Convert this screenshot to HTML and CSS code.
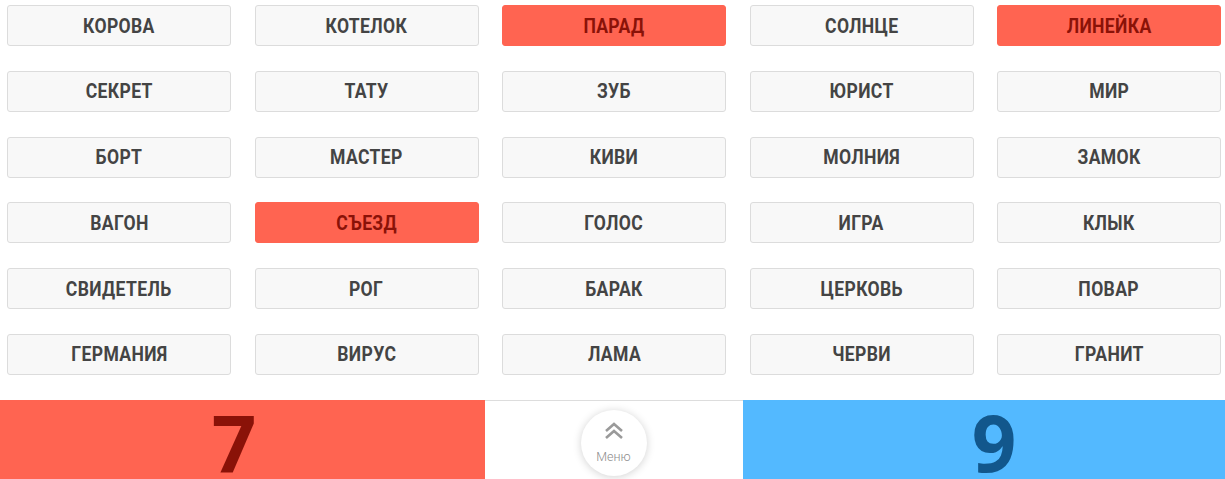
FILE: index.html
```html
<!DOCTYPE html>
<html lang="ru">
<head>
<meta charset="utf-8">
<title>Игра</title>
<link rel="stylesheet" href="styles.css">
</head>
<body>
<div class="board">
  <div class="card"><span class="word">КОРОВА</span></div>
  <div class="card"><span class="word">КОТЕЛОК</span></div>
  <div class="card red"><span class="word">ПАРАД</span></div>
  <div class="card"><span class="word">СОЛНЦЕ</span></div>
  <div class="card red"><span class="word">ЛИНЕЙКА</span></div>

  <div class="card"><span class="word">СЕКРЕТ</span></div>
  <div class="card"><span class="word">ТАТУ</span></div>
  <div class="card"><span class="word">ЗУБ</span></div>
  <div class="card"><span class="word">ЮРИСТ</span></div>
  <div class="card"><span class="word">МИР</span></div>

  <div class="card"><span class="word">БОРТ</span></div>
  <div class="card"><span class="word">МАСТЕР</span></div>
  <div class="card"><span class="word">КИВИ</span></div>
  <div class="card"><span class="word">МОЛНИЯ</span></div>
  <div class="card"><span class="word">ЗАМОК</span></div>

  <div class="card"><span class="word">ВАГОН</span></div>
  <div class="card red"><span class="word">СЪЕЗД</span></div>
  <div class="card"><span class="word">ГОЛОС</span></div>
  <div class="card"><span class="word">ИГРА</span></div>
  <div class="card"><span class="word">КЛЫК</span></div>

  <div class="card"><span class="word">СВИДЕТЕЛЬ</span></div>
  <div class="card"><span class="word">РОГ</span></div>
  <div class="card"><span class="word">БАРАК</span></div>
  <div class="card"><span class="word">ЦЕРКОВЬ</span></div>
  <div class="card"><span class="word">ПОВАР</span></div>

  <div class="card"><span class="word">ГЕРМАНИЯ</span></div>
  <div class="card"><span class="word">ВИРУС</span></div>
  <div class="card"><span class="word">ЛАМА</span></div>
  <div class="card"><span class="word">ЧЕРВИ</span></div>
  <div class="card"><span class="word">ГРАНИТ</span></div>
</div>
<div class="score">
  <div class="team team-red"><span class="num">7</span></div>
  <div class="middle">
    <button class="menu">
      <svg class="chev" width="20" height="18" viewBox="0 0 20 18">
        <polyline points="2,9 10,2 18,9" fill="none" stroke="#9a9a9a" stroke-width="2.6"/>
        <polyline points="2,16 10,9 18,16" fill="none" stroke="#9a9a9a" stroke-width="2.6"/>
      </svg>
      <span class="menu-label">Меню</span>
    </button>
  </div>
  <div class="team team-blue"><span class="num">9</span></div>
</div>
</body>
</html>
```

FILE: styles.css
```css
* { box-sizing: border-box; }
html, body { margin: 0; padding: 0; background: #fff; }
body { font-family: Roboto, "Noto Sans", sans-serif; overflow: hidden; }

.board {
  display: grid;
  grid-template-columns: repeat(5, 1fr);
  column-gap: 23.5px;
  row-gap: 24.8px;
  padding: 5px 4px 0 7px;
}
.card {
  height: 41px;
  display: flex;
  align-items: center;
  justify-content: center;
  background: #f8f8f8;
  border: 1px solid #dcdcdc;
  border-radius: 3px;
  color: #444;
  font-weight: 700;
  font-size: 19.5px;
  letter-spacing: 0.4px;
}
.word {
  display: inline-block;
  transform: scaleX(0.9);
  padding-top: 1px;
}
.card.red {
  background: #ff6451;
  border-color: #ff6451;
  color: #8a1208;
}

.score {
  margin-top: 25px;
  display: grid;
  grid-template-columns: 485px 258px 1fr;
  height: 79px;
}
.team {
  display: flex;
  justify-content: center;
  align-items: flex-start;
  font-family: "Open Sans", Roboto, sans-serif;
  font-weight: 700;
  font-size: 78px;
  overflow: hidden;
}
.num { line-height: 60px; margin-top: 12px; }
.team-red { background: #ff6451; color: #8a1208; padding-right: 17px; }
.team-blue { background: #53b9ff; color: #12578c; padding-left: 20px; }
.middle {
  border-top: 1px solid #dddddd;
  display: flex;
  justify-content: center;
  padding-top: 9px;
  padding-right: 1px;
}
.menu {
  width: 66px;
  height: 66px;
  border-radius: 50%;
  border: none;
  background: #fff;
  box-shadow: 0 1px 8px rgba(0,0,0,0.18);
  display: flex;
  flex-direction: column;
  align-items: center;
  padding: 12px 0 0;
  font-family: Roboto, sans-serif;
}
.chev { display: block; }
.menu-label {
  margin-top: 9px;
  font-size: 12.5px;
  font-weight: 300;
  color: #8c8c8c;
}
```
